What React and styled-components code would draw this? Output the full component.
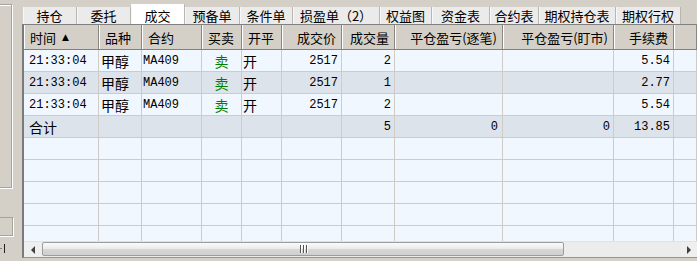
import React from "react"
import styled, { createGlobalStyle } from "styled-components"

const GlobalStyle = createGlobalStyle`
  html, body {
    margin: 0;
    padding: 0;
    background: #d4d0c8;
  }
  body {
    font-family: "Noto Sans CJK SC", "Liberation Sans", sans-serif;
    font-size: 13px;
    color: #000;
    overflow: hidden;
  }
`

const tabs = [
  { label: "持仓", w: 54 },
  { label: "委托", w: 54 },
  { label: "成交", w: 54, active: true },
  { label: "预备单", w: 55 },
  { label: "条件单", w: 53 },
  { label: "损盈单（2）", w: 87 },
  { label: "权益图", w: 52 },
  { label: "资金表", w: 58 },
  { label: "合约表", w: 49 },
  { label: "期权持仓表", w: 77 },
  { label: "期权行权", w: 65 },
]

const columns = [
  { title: "时间", sort: true, w: 75, head: "left", body: "left", pad: 5, mono: true },
  { title: "品种", w: 43, head: "left", body: "left", pad: 2 },
  { title: "合约", w: 60, head: "left", body: "left", pad: 1, mono: true },
  { title: "买卖", w: 40, head: "left", body: "center", pad: 0, sell: true },
  { title: "开平", w: 40, head: "left", body: "left", pad: 1 },
  { title: "成交价", w: 60, head: "right", body: "right", pad: 3, mono: true },
  { title: "成交量", w: 53, head: "right", body: "right", pad: 3, mono: true },
  { title: "平仓盈亏(逐笔)", w: 108, head: "right", body: "right", pad: 4, mono: true },
  { title: "平仓盈亏(盯市)", w: 111, head: "right", body: "right", pad: 3, mono: true },
  { title: "手续费", w: 60, head: "right", body: "right", pad: 3, mono: true },
]

const trades = [
  ["21:33:04", "甲醇", "MA409", "卖", "开", "2517", "2", "", "", "5.54"],
  ["21:33:04", "甲醇", "MA409", "卖", "开", "2517", "1", "", "", "2.77"],
  ["21:33:04", "甲醇", "MA409", "卖", "开", "2517", "2", "", "", "5.54"],
]
const total = ["合计", "", "", "", "", "", "5", "0", "0", "13.85"]

const gridCols = columns.map((c) => `${c.w}px`).join(" ") + " 1fr"

const App = () => {
  const emptyRows = Array.from({ length: 5 })
  return (
    <>
      <GlobalStyle />
      <Page>
        <LeftPanel>
          <GroupBox />
          <InputBox />
          <Splitter>
            <span className="dash" />
            <span className="bar" />
          </Splitter>
        </LeftPanel>
        <Main>
          <TabBar>
            {tabs.map((t) => (
              <Tab key={t.label} $w={t.w} $active={t.active}>
                {t.label}
              </Tab>
            ))}
          </TabBar>
          <Frame>
            <HeaderRow>
              {columns.map((c) => (
                <HeadCell key={c.title} $align={c.head}>
                  {c.title}
                  {c.sort && <SortArrow>▲</SortArrow>}
                </HeadCell>
              ))}
              <HeadCell />
            </HeaderRow>
            <Body>
              {trades.map((row, i) => (
                <Row key={i} $shaded={i % 2 === 1}>
                  {columns.map((c, j) => (
                    <Cell
                      key={j}
                      $align={c.body}
                      $pad={c.pad}
                      $mono={c.mono}
                      $sell={c.sell}
                    >
                      {row[j]}
                    </Cell>
                  ))}
                  <Cell />
                </Row>
              ))}
              <Row $shaded>
                {columns.map((c, j) => (
                  <Cell
                    key={j}
                    $align={c.body}
                    $pad={j === 0 ? 5 : c.pad}
                    $mono={j !== 0 && c.mono}
                  >
                    {total[j]}
                  </Cell>
                ))}
                <Cell />
              </Row>
              {emptyRows.map((_, i) => (
                <Row key={"e" + i}>
                  {columns.map((c, j) => (
                    <Cell key={j} />
                  ))}
                  <Cell />
                </Row>
              ))}
            </Body>
            <ScrollBar>
              <ArrowButton>
                <svg width="6" height="8" viewBox="0 0 6 8">
                  <path d="M5 0 L1 4 L5 8 Z" fill="#404040" />
                </svg>
              </ArrowButton>
              <Track>
                <Thumb>
                  <Grip>
                    <i />
                    <i />
                    <i />
                  </Grip>
                </Thumb>
              </Track>
              <ArrowButton $right>
                <svg width="6" height="8" viewBox="0 0 6 8">
                  <path d="M1 0 L5 4 L1 8 Z" fill="#404040" />
                </svg>
              </ArrowButton>
            </ScrollBar>
          </Frame>
        </Main>
      </Page>
    </>
  )
}

export default App

const Page = styled.div`
  width: 697px;
  height: 261px;
  display: flex;
  overflow: hidden;
  background: #d4d0c8;
`

const LeftPanel = styled.div`
  width: 22px;
  flex-shrink: 0;
  display: flex;
  flex-direction: column;
  overflow: hidden;
`

const GroupBox = styled.div`
  margin: 4px 0 0 -4px;
  width: 16px;
  height: 184px;
  box-sizing: border-box;
  border: 1px solid #a6a39c;
  box-shadow: 1px 1px 0 #ffffff, inset 1px 1px 0 #ffffff;
`

const InputBox = styled.div`
  margin: 29px 0 0 -4px;
  width: 17px;
  height: 19px;
  box-sizing: border-box;
  border: 1px solid #a6a39c;
  box-shadow: 1px 1px 0 #ffffff;
`

const Splitter = styled.div`
  margin-top: 8px;
  height: 9px;
  display: flex;
  align-items: center;
  gap: 2px;
  .dash {
    width: 2px;
    height: 1px;
    background: #808080;
  }
  .bar {
    width: 1px;
    height: 9px;
    background: #202020;
  }
`

const Main = styled.div`
  flex: 1;
  display: flex;
  flex-direction: column;
  min-width: 0;
`

const TabBar = styled.div`
  height: 24px;
  padding-left: 1px;
  display: flex;
  align-items: flex-end;
`

const Tab = styled.div`
  width: ${(p) => p.$w}px;
  height: ${(p) => (p.$active ? 20 : 17)}px;
  box-sizing: border-box;
  flex-shrink: 0;
  display: flex;
  align-items: center;
  justify-content: center;
  background: ${(p) => (p.$active ? "#ffffff" : "#ebebeb")};
  border-right: 1px solid #b9b6b0;
  box-shadow: inset 1px 0 0 #f8f8f8;
  font-size: 13px;
  line-height: 1;
  white-space: nowrap;
  padding-top: ${(p) => (p.$active ? 2 : 0)}px;
`

const Frame = styled.div`
  height: 234px;
  box-sizing: border-box;
  border-top: 1px solid #808080;
  border-left: 2px solid #7a7a7a;
  border-bottom: 1px solid #8d96a6;
  display: flex;
  flex-direction: column;
  background: #f0f7ff;
`

const HeaderRow = styled.div`
  display: grid;
  grid-template-columns: ${gridCols};
  height: 25px;
  box-sizing: border-box;
  background: #d4d0c8;
  border-bottom: 1px solid #808080;
`

const HeadCell = styled.div`
  display: flex;
  align-items: center;
  justify-content: ${(p) => (p.$align === "right" ? "flex-end" : "flex-start")};
  padding: 0 5px 0 6px;
  box-sizing: border-box;
  border-right: 1px solid #8a8782;
  box-shadow: inset 1px 0 0 #ffffff;
  font-size: 13px;
  white-space: nowrap;
  overflow: hidden;
`

const SortArrow = styled.span`
  font-size: 9px;
  margin-left: 6px;
  font-family: "DejaVu Sans", sans-serif;
`

const Body = styled.div`
  height: 191px;
  overflow: hidden;
`

const Row = styled.div`
  display: grid;
  grid-template-columns: ${gridCols};
  height: 22px;
  box-sizing: border-box;
  border-bottom: 1px solid #cfcbc6;
  background: ${(p) => (p.$shaded ? "#dde3eb" : "#f0f7ff")};
`

const Cell = styled.div`
  display: flex;
  align-items: center;
  justify-content: ${(p) =>
    p.$align === "right" ? "flex-end" : p.$align === "center" ? "center" : "flex-start"};
  padding: 0 ${(p) => (p.$align === "right" ? p.$pad : 0)}px 0
    ${(p) => (p.$align === "left" ? p.$pad : 0)}px;
  box-sizing: border-box;
  border-right: 1px solid #cfcbc6;
  font-family: ${(p) =>
    p.$mono
      ? `"Liberation Mono", "Noto Sans CJK SC", monospace`
      : `"Noto Sans CJK SC", "Liberation Sans", sans-serif`};
  font-size: ${(p) => (p.$mono ? 12 : 14)}px;
  color: ${(p) => (p.$sell ? "#008000" : "#000")};
  white-space: nowrap;
  overflow: hidden;
`

const ScrollBar = styled.div`
  height: 16px;
  display: flex;
  background: #ececec;
  border-top: 1px solid #e2e2e2;
  box-sizing: border-box;
`

const ArrowButton = styled.div`
  width: ${(p) => (p.$right ? 16 : 18)}px;
  flex-shrink: 0;
  display: flex;
  align-items: center;
  justify-content: center;
  background: #efefef;
`

const Track = styled.div`
  flex: 1;
  display: flex;
  align-items: stretch;
  padding: 0 0 1px 0;
`

const Thumb = styled.div`
  width: 522px;
  box-sizing: border-box;
  border: 1px solid #9c9c9c;
  border-radius: 2px;
  background: linear-gradient(#fbfbfb, #ececec 45%, #d6d6d6 55%, #cfcfcf);
  display: flex;
  align-items: center;
  justify-content: center;
`

const Grip = styled.div`
  display: flex;
  gap: 2px;
  height: 8px;
  i {
    width: 1px;
    height: 8px;
    background: #555;
    box-shadow: 1px 0 0 #fff;
  }
`
